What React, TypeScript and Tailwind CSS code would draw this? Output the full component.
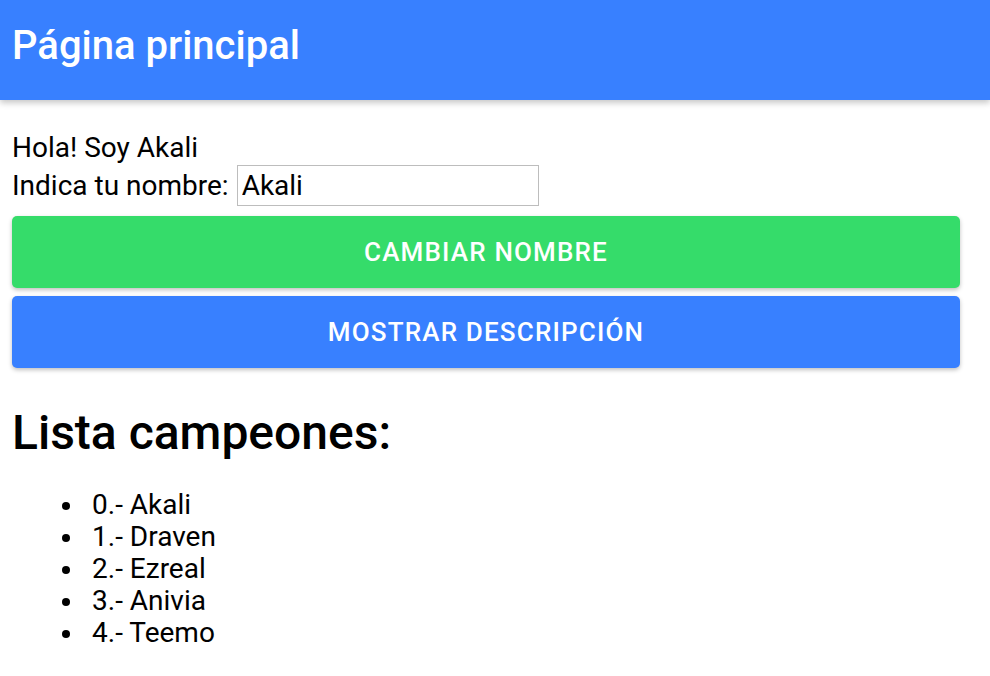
import { useState } from "react";

const campeones = ["Akali", "Draven", "Ezreal", "Anivia", "Teemo"];

export default function App() {
    const [nombre, setNombre] = useState("Akali");
    const [input, setInput] = useState("Akali");

    return (
        <div className="min-h-[676px] bg-white text-black font-['Roboto',sans-serif]">
            {/* toolbar */}
            <header className="h-[100px] bg-[#3880ff] flex items-center px-3 shadow-[0_3px_6px_rgba(0,0,0,0.22)]">
                <h1 className="text-[40px] leading-none font-medium text-white pb-[8px]">Página principal</h1>
            </header>

            <main className="pl-3 pr-[30px] pt-[32px]">
                <p className="text-[28px] leading-[32px]">Hola! Soy {nombre}</p>
                <div className="flex items-center text-[28px] leading-[32px] mt-[1px]">
                    <span>Indica tu nombre:</span>
                    <input
                        value={input}
                        onChange={(e) => setInput(e.target.value)}
                        className="ml-[8px] w-[302px] h-[41px] border border-[#bdbdbd] px-[4px] text-[28px] outline-none"
                    />
                </div>

                <button
                    onClick={() => setNombre(input)}
                    className="mt-[10px] w-full h-[72px] rounded-[5px] bg-[#35dc6a] text-white text-[26px] font-medium tracking-[0.045em] shadow-[0_2px_4px_rgba(0,0,0,0.25)]"
                >
                    CAMBIAR NOMBRE
                </button>
                <button className="mt-[8px] w-full h-[72px] rounded-[5px] bg-[#3880ff] text-white text-[26px] font-medium tracking-[0.045em] shadow-[0_2px_4px_rgba(0,0,0,0.25)]">
                    MOSTRAR DESCRIPCIÓN
                </button>

                <h2 className="mt-[37px] text-[48px] leading-[56px] font-medium">Lista campeones:</h2>
                <ul className="mt-[28px] pl-[50px] text-[28px] leading-[32px]">
                    {campeones.map((c, i) => (
                        <li key={i} className="flex items-center">
                            <span className="w-[8px] h-[8px] rounded-full bg-black mr-[22px] mt-[2px]" />
                            <span>{i}.- {c}</span>
                        </li>
                    ))}
                </ul>
            </main>
        </div>
    );
}
